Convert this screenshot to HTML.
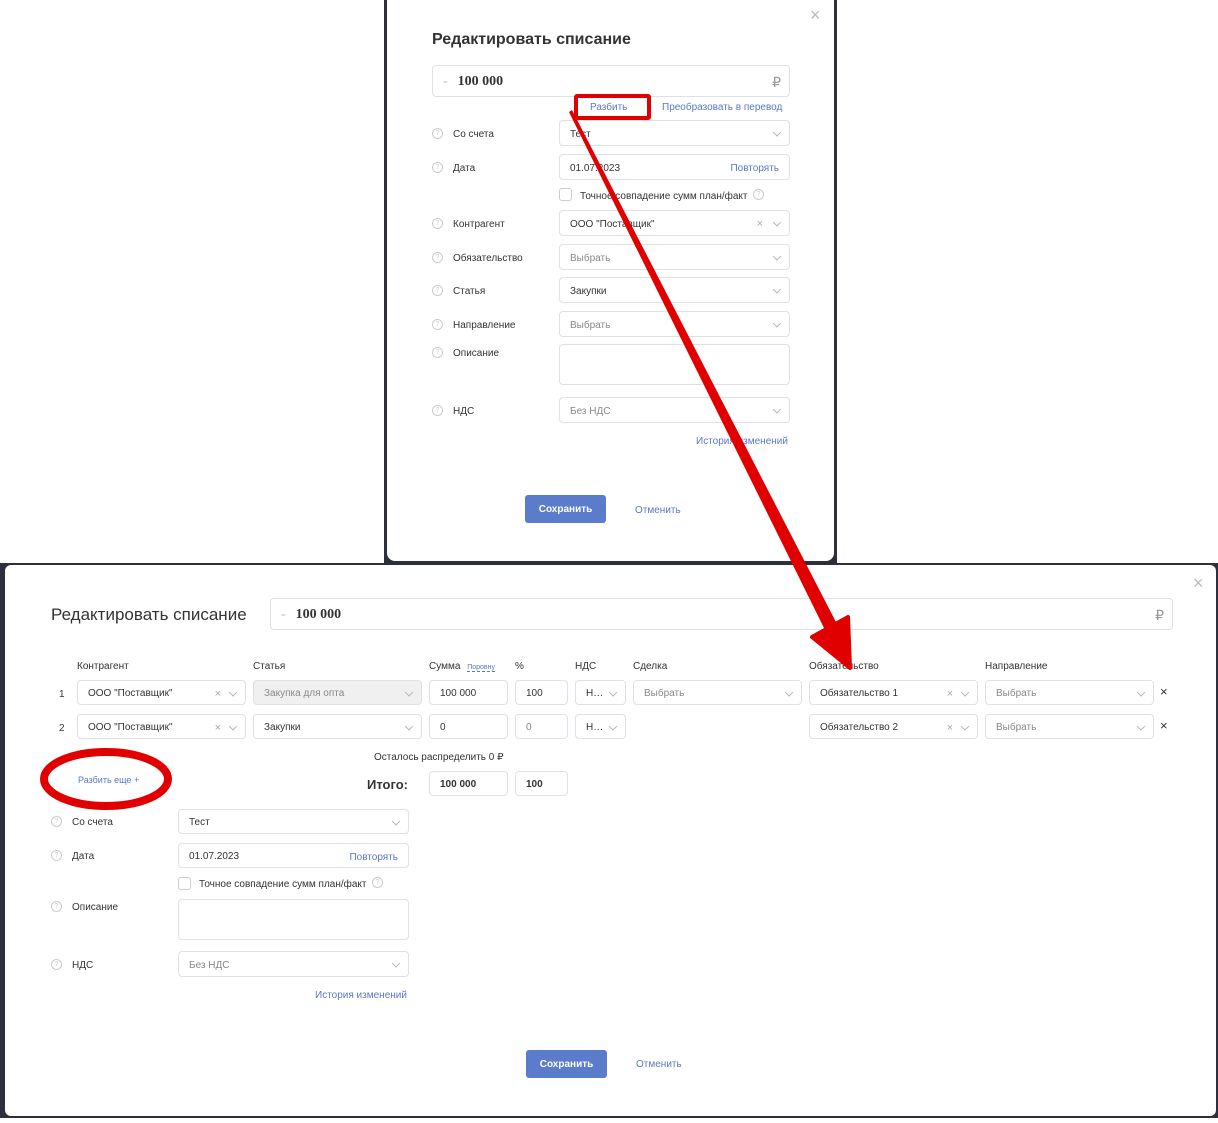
<!DOCTYPE html>
<html><head><meta charset="utf-8"><style>
*{box-sizing:border-box;margin:0;padding:0}
body{width:1218px;height:1123px;position:relative;background:#fff;font-family:"Liberation Sans","DejaVu Sans",sans-serif;color:#333;overflow:hidden;font-size:10px}
.a{position:absolute}
.inp{position:absolute;border:1px solid #dfe1e6;border-radius:4px;background:#fff;font-size:10px;color:#333;padding-left:10px;padding-top:2px;display:flex;align-items:center}
.ph{color:#888}
.chev{position:absolute;right:9px;top:50%;width:6px;height:6px;border-right:1px solid #b5b5b5;border-bottom:1px solid #b5b5b5;transform:translateY(-60%) rotate(45deg)}
.x{position:absolute;color:#aaa;font-size:11px}
.lbl{position:absolute;font-size:10px;color:#333;margin-top:1px}
.q{position:absolute;width:11px;height:11px;border:1px solid #ccc;border-radius:50%;color:#ccc;font-size:7px;text-align:center;line-height:9px}
.link{position:absolute;color:#5a78c8;font-size:10px;margin-top:1px}
.btn{position:absolute;background:#5b7bcb;color:#fff;border-radius:3px;font-size:10px;font-weight:bold;display:flex;align-items:center;justify-content:center}
.cb{position:absolute;width:13px;height:13px;border:1px solid #ccc;border-radius:3px}
</style></head><body>
<div class="a" style="left:384px;top:0;width:453px;height:564px;background:#2e2f3d"></div>
<div class="a" style="left:387px;top:0;width:447px;height:561px;background:#fff;border-radius:0 0 8px 8px"></div>
<div class="a" style="left:810px;top:5px;font-size:18px;color:#bbb">×</div>
<div class="a" style="left:432px;top:31px;font-size:16px;font-weight:bold;color:#333">Редактировать списание</div>
<div class="inp" style="left:432px;top:65px;width:358px;height:32px;font-size:14px;font-weight:bold;font-family:'Liberation Serif',serif"><span style="color:#bbb;font-weight:normal;margin-right:10px">-</span>100 000<span style="position:absolute;right:8px;color:#999;font-weight:normal;font-family:'Liberation Sans',sans-serif">₽</span></div>
<div class="link" style="left:590px;top:101px">Разбить</div>
<div class="link" style="left:662px;top:101px">Преобразовать в перевод</div>

<div class="q" style="left:432px;top:128px">?</div><div class="lbl" style="left:453px;top:128px">Со счета</div>
<div class="inp" style="left:559px;top:120px;width:231px;height:26px">Тест<i class="chev"></i></div>
<div class="q" style="left:432px;top:162px">?</div><div class="lbl" style="left:453px;top:162px">Дата</div>
<div class="inp" style="left:559px;top:154px;width:231px;height:26px">01.07.2023<span class="link" style="right:10px;position:absolute">Повторять</span></div>
<div class="cb" style="left:559px;top:188px"></div><div class="lbl" style="left:580px;top:190px">Точное совпадение сумм план/факт</div><div class="q" style="left:753px;top:189px">?</div>
<div class="q" style="left:432px;top:218px">?</div><div class="lbl" style="left:453px;top:218px">Контрагент</div>
<div class="inp" style="left:559px;top:210px;width:231px;height:26px">ООО "Поставщик"<span class="x" style="right:26px">×</span><i class="chev"></i></div>
<div class="q" style="left:432px;top:252px">?</div><div class="lbl" style="left:453px;top:252px">Обязательство</div>
<div class="inp ph" style="left:559px;top:244px;width:231px;height:26px">Выбрать<i class="chev"></i></div>
<div class="q" style="left:432px;top:285px">?</div><div class="lbl" style="left:453px;top:285px">Статья</div>
<div class="inp" style="left:559px;top:277px;width:231px;height:26px">Закупки<i class="chev"></i></div>
<div class="q" style="left:432px;top:319px">?</div><div class="lbl" style="left:453px;top:319px">Направление</div>
<div class="inp ph" style="left:559px;top:311px;width:231px;height:26px">Выбрать<i class="chev"></i></div>
<div class="q" style="left:432px;top:347px">?</div><div class="lbl" style="left:453px;top:347px">Описание</div>
<div class="inp" style="left:559px;top:344px;width:231px;height:41px"></div>
<div class="q" style="left:432px;top:405px">?</div><div class="lbl" style="left:453px;top:405px">НДС</div>
<div class="inp ph" style="left:559px;top:397px;width:231px;height:26px">Без НДС<i class="chev"></i></div>
<div class="link" style="left:696px;top:435px">История изменений</div>
<div class="btn" style="left:525px;top:495px;width:81px;height:28px">Сохранить</div>
<div class="link" style="left:635px;top:504px">Отменить</div>

<div class="a" style="left:0;top:563px;width:1218px;height:560px;background:#2e2f3d"></div>
<div class="a" style="left:0;top:1118px;width:1218px;height:5px;background:#fff"></div>
<div class="a" style="left:5px;top:565px;width:1211px;height:551px;background:#fff;border-radius:6px"></div>
<div class="a" style="left:1193px;top:573px;font-size:18px;color:#bbb">×</div>
<div class="a" style="left:51px;top:605px;font-size:17px;color:#333">Редактировать списание</div>
<div class="inp" style="left:270px;top:598px;width:903px;height:32px;font-size:14px;font-weight:bold;font-family:'Liberation Serif',serif"><span style="color:#bbb;font-weight:normal;margin-right:10px">-</span>100 000<span style="position:absolute;right:8px;color:#999;font-weight:normal;font-family:'Liberation Sans',sans-serif">₽</span></div>

<div class="lbl" style="left:77px;top:660px">Контрагент</div>
<div class="lbl" style="left:253px;top:660px">Статья</div>
<div class="lbl" style="left:429px;top:660px">Сумма <span style="color:#5a78c8;font-size:7px;border-bottom:1px dashed #5a78c8;margin-left:4px">Поровну</span></div>
<div class="lbl" style="left:515px;top:660px">%</div>
<div class="lbl" style="left:575px;top:660px">НДС</div>
<div class="lbl" style="left:633px;top:660px">Сделка</div>
<div class="lbl" style="left:809px;top:660px">Обязательство</div>
<div class="lbl" style="left:985px;top:660px">Направление</div>

<div class="lbl" style="left:59px;top:688px">1</div>
<div class="inp" style="left:77px;top:680px;width:169px;height:25px">ООО "Поставщик"<span class="x" style="right:24px">×</span><i class="chev"></i></div>
<div class="inp ph" style="left:253px;top:680px;width:169px;height:25px;background:#f0f0f0">Закупка для опта<i class="chev"></i></div>
<div class="inp" style="left:429px;top:680px;width:79px;height:25px">100 000</div>
<div class="inp" style="left:515px;top:680px;width:53px;height:25px">100</div>
<div class="inp" style="left:575px;top:680px;width:51px;height:25px">Н…<i class="chev"></i></div>
<div class="inp ph" style="left:633px;top:680px;width:169px;height:25px">Выбрать<i class="chev"></i></div>
<div class="inp" style="left:809px;top:680px;width:169px;height:25px">Обязательство 1<span class="x" style="right:24px">×</span><i class="chev"></i></div>
<div class="inp ph" style="left:985px;top:680px;width:169px;height:25px">Выбрать<i class="chev"></i></div>
<div class="a" style="left:1160px;top:684px;font-size:13px;color:#333">×</div>

<div class="lbl" style="left:59px;top:722px">2</div>
<div class="inp" style="left:77px;top:714px;width:169px;height:25px">ООО "Поставщик"<span class="x" style="right:24px">×</span><i class="chev"></i></div>
<div class="inp" style="left:253px;top:714px;width:169px;height:25px">Закупки<i class="chev"></i></div>
<div class="inp" style="left:429px;top:714px;width:79px;height:25px">0</div>
<div class="inp ph" style="left:515px;top:714px;width:53px;height:25px">0</div>
<div class="inp" style="left:575px;top:714px;width:51px;height:25px">Н…<i class="chev"></i></div>
<div class="inp" style="left:809px;top:714px;width:169px;height:25px">Обязательство 2<span class="x" style="right:24px">×</span><i class="chev"></i></div>
<div class="inp ph" style="left:985px;top:714px;width:169px;height:25px">Выбрать<i class="chev"></i></div>
<div class="a" style="left:1160px;top:718px;font-size:13px;color:#333">×</div>

<div class="lbl" style="left:374px;top:751px">Осталось распределить 0 ₽</div>
<div class="link" style="left:78px;top:774px;font-size:9px">Разбить еще +</div>
<div class="a" style="left:367px;top:777px;font-size:13px;font-weight:bold">Итого:</div>
<div class="inp" style="left:429px;top:771px;width:79px;height:25px;font-weight:bold">100 000</div>
<div class="inp" style="left:515px;top:771px;width:53px;height:25px;font-weight:bold">100</div>

<div class="q" style="left:51px;top:816px">?</div><div class="lbl" style="left:72px;top:816px">Со счета</div>
<div class="inp" style="left:178px;top:809px;width:231px;height:25px">Тест<i class="chev"></i></div>
<div class="q" style="left:51px;top:850px">?</div><div class="lbl" style="left:72px;top:850px">Дата</div>
<div class="inp" style="left:178px;top:843px;width:231px;height:25px">01.07.2023<span class="link" style="right:10px;position:absolute">Повторять</span></div>
<div class="cb" style="left:178px;top:877px"></div><div class="lbl" style="left:199px;top:878px">Точное совпадение сумм план/факт</div><div class="q" style="left:372px;top:877px">?</div>
<div class="q" style="left:51px;top:901px">?</div><div class="lbl" style="left:72px;top:901px">Описание</div>
<div class="inp" style="left:178px;top:899px;width:231px;height:41px"></div>
<div class="q" style="left:51px;top:959px">?</div><div class="lbl" style="left:72px;top:959px">НДС</div>
<div class="inp ph" style="left:178px;top:951px;width:231px;height:26px">Без НДС<i class="chev"></i></div>
<div class="link" style="left:315px;top:989px">История изменений</div>
<div class="btn" style="left:526px;top:1050px;width:81px;height:28px">Сохранить</div>
<div class="link" style="left:636px;top:1058px">Отменить</div>

<svg class="a" style="left:0;top:0" width="1218" height="1123">
<rect x="576" y="96" width="73" height="22" fill="none" stroke="#e00000" stroke-width="4" rx="1"/>
<ellipse cx="106" cy="779" rx="62" ry="27" fill="none" stroke="#e00000" stroke-width="8"/>
<polygon points="569,112 572,110 838,626 826,632" fill="#e00000"/>
<polygon points="812,637 848,617 850,668" fill="#e00000" stroke="#e00000" stroke-width="4" stroke-linejoin="round"/>
</svg>
</body></html>
